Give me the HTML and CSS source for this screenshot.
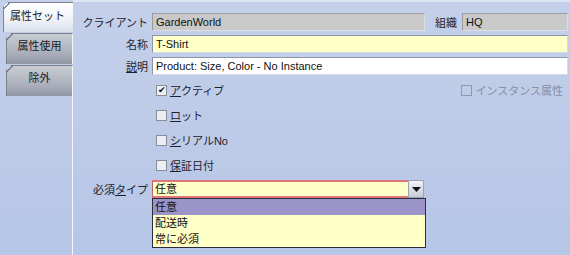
FILE: index.html
```html
<!DOCTYPE html>
<html lang="ja">
<head>
<meta charset="utf-8">
<link rel="stylesheet" href="styles.css">
</head>
<body>
<div class="app">
  <div class="tabs">
    <div class="tab active">属性セット</div>
    <div class="tab">属性使用</div>
    <div class="tab">除外</div>
    <div class="tabfill"></div>
  </div>
  <div class="panel">
    <div class="row">
      <span class="lbl">クライアント</span>
      <div class="field ro client">GardenWorld</div>
      <span class="lbl2">組織</span>
      <div class="field ro grow">HQ</div>
    </div>
    <div class="row">
      <span class="lbl">名称</span>
      <div class="field req grow">T-Shirt</div>
    </div>
    <div class="row">
      <span class="lbl"><u>説</u>明</span>
      <div class="field grow">Product: Size, Color - No Instance</div>
    </div>
    <div class="checks">
      <div class="chk-row">
        <span class="chk"><span class="box">✔</span><u>ア</u>クティブ</span>
        <span class="chk disabled"><span class="box"></span>インスタンス属性</span>
      </div>
      <div class="chk-row">
        <span class="chk"><span class="box"></span><u>ロ</u>ット</span>
      </div>
      <div class="chk-row">
        <span class="chk"><span class="box"></span><u>シ</u>リアルNo</span>
      </div>
      <div class="chk-row">
        <span class="chk"><span class="box"></span><u>保</u>証日付</span>
      </div>
    </div>
    <div class="row combo-row">
      <span class="lbl">必須<u>タ</u>イプ</span>
      <div class="combo">
        <div class="combo-field">任意</div>
        <div class="combo-btn">
          <svg width="9" height="5" viewBox="0 0 9 5"><path d="M0 0H9L4.5 5Z" fill="#111"/></svg>
        </div>
        <ul class="list">
          <li class="sel">任意</li>
          <li>配送時</li>
          <li>常に必須</li>
        </ul>
      </div>
    </div>
  </div>
</div>
</body>
</html>
```

FILE: styles.css
```css
* { box-sizing: border-box; }
html, body { margin: 0; padding: 0; }
body {
  width: 570px;
  height: 255px;
  overflow: hidden;
  font-family: "Liberation Sans", "Noto Sans CJK JP", sans-serif;
  font-size: 11px;
  color: #1c2230;
  background: linear-gradient(#c4d0ea, #b6c6e6);
}
u { text-decoration: underline; text-underline-offset: 1px; }

.app {
  display: flex;
  height: 255px;
}

/* tabs */
.tabs {
  width: 73px;
  display: flex;
  flex-direction: column;
  padding-top: 2px;
}
.tab {
  position: relative;
  height: 31px;
  margin-left: 6px;
  border-left: 1px solid #7c808c;
  border-top: 1px solid #7c808c;
  border-right: 1px solid #f4f6fb;
  text-align: center;
  padding-top: 3px;
  color: #1a1a22;
  clip-path: polygon(5px 0, 100% 0, 100% 100%, 0 100%, 0 5px);
  background:
    linear-gradient(135deg, transparent 3px, #7c808c 3px, #7c808c 4.4px, transparent 4.4px),
    linear-gradient(#c9ccd3, #a7acb8 70%, #8f96a4);
}
.tab.active {
  margin-left: 3px;
  height: 30px;
  border-right: none;
  text-align: left;
  padding-left: 6px;
  padding-top: 4px;
  background:
    linear-gradient(135deg, transparent 3px, #8a8e98 3px, #8a8e98 4.4px, transparent 4.4px),
    linear-gradient(#ffffff, #eef1f7 60%, #d8dfec);
}
.tab + .tab { margin-top: 1px; }
.tabfill {
  flex: 1;
  border-right: 1px solid #f4f6fb;
}

/* panel */
.panel {
  flex: 1;
  display: flex;
  flex-direction: column;
  border-top: 2px solid #dde4f3;
  padding: 11px 2px 0 0;
  position: relative;
}
.row {
  display: flex;
  align-items: center;
  height: 18px;
}
.row + .row { margin-top: 4px; }
.lbl {
  width: 75px;
  text-align: right;
  margin-right: 4px;
  white-space: nowrap;
}
.lbl2 {
  margin-left: 10px;
  margin-right: 5px;
  white-space: nowrap;
}
.field {
  height: 18px;
  line-height: 16px;
  padding: 0 3px;
  border: 1px solid #8e96a4;
  border-right-color: #d4dae6;
  border-bottom-color: #d4dae6;
  background: #ffffff;
  color: #111;
  white-space: nowrap;
  overflow: hidden;
}
.field.ro { background: #c9c9c9; border-color: #9a9ca2 #dedfe2 #dedfe2 #9a9ca2; }
.field.req { background: #ffffc8; }
.client { width: 273px; }
.grow { flex: 1; }

/* checkboxes */
.checks {
  display: flex;
  flex-direction: column;
  gap: 9px;
  margin-top: 7px;
  padding-left: 83px;
  padding-right: 5px;
}
.chk-row {
  display: flex;
  justify-content: space-between;
  align-items: center;
  height: 16px;
}
.chk {
  display: flex;
  align-items: center;
  white-space: nowrap;
}
.box {
  width: 11px;
  height: 11px;
  border: 1px solid #888c96;
  background: #eceef3;
  margin-right: 3px;
  font-size: 9px;
  line-height: 9px;
  text-align: center;
  color: #111;
}
.chk.disabled { color: #8590a6; }
.chk.disabled .box { background: transparent; border-color: #9098aa; }

/* combo */
.combo-row { margin-top: 7px; }
.row.combo-row { margin-top: 7px; }
.combo {
  position: relative;
  display: flex;
  width: 272px;
  height: 18px;
}
.combo-field {
  flex: 1;
  background: #ffffc8;
  border-top: 2px solid #e0767a;
  border-bottom: 2px solid #e0767a;
  border-left: 1px solid #c46070;
  line-height: 14px;
  padding-left: 2px;
  color: #111;
}
.combo-btn {
  width: 16px;
  display: flex;
  align-items: center;
  justify-content: center;
  background: linear-gradient(#f0f2f6, #c6ccd8);
  border: 1px solid #9aa2b2;
}
.list {
  position: absolute;
  left: 0;
  top: 18px;
  width: 274px;
  margin: 0;
  padding: 0;
  list-style: none;
  background: #ffffc8;
  border: 1px solid #2a2e3a;
  z-index: 2;
}
.list li {
  height: 16px;
  line-height: 16px;
  padding-left: 2px;
  color: #111;
}
.list li.sel { background: #9b94c8; }
```
